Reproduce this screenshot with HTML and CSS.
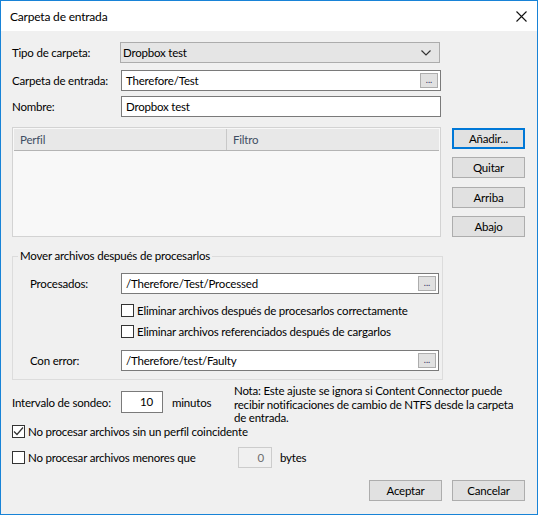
FILE: index.html
```html
<!DOCTYPE html>
<html lang="es">
  <head>
    <meta charset="UTF-8">
    <title>Carpeta de entrada</title>
    <link rel="stylesheet" href="styles.css">
  </head>
  <body>
    <div class="dialog">
      <div class="titlebar">
        <span class="title">Carpeta de entrada</span>
        <span class="close">
          <svg width="11" height="11" viewBox="0 0 11 11"><path d="M0.5 0.5 L10.5 10.5 M10.5 0.5 L0.5 10.5" stroke="#111" stroke-width="1.1" fill="none"/></svg>
        </span>
      </div>

      <div class="content">
        <div class="row row_first">
          <div class="label">Tipo de carpeta:</div>
          <div class="combo">
            <span>Dropbox test</span>
            <svg width="10" height="6" viewBox="0 0 10 6"><path d="M0.5 0.5 L5 5 L9.5 0.5" stroke="#333" stroke-width="1.2" fill="none"/></svg>
          </div>
        </div>
        <div class="row row_second">
          <div class="label">Carpeta de entrada:</div>
          <div class="textbox">
            <span>Therefore/Test</span>
            <span class="browse">...</span>
          </div>
        </div>
        <div class="row row_third">
          <div class="label">Nombre:</div>
          <div class="textbox"><span>Dropbox test</span></div>
        </div>

        <div class="profiles">
          <div class="listview">
            <div class="list_header">
              <div class="col col_profile">Perfil</div>
              <div class="col col_filter">Filtro</div>
            </div>
          </div>
          <div class="side_buttons">
            <div class="button button_default">Añadir...</div>
            <div class="button">Quitar</div>
            <div class="button">Arriba</div>
            <div class="button">Abajo</div>
          </div>
        </div>

        <fieldset class="group">
          <legend>Mover archivos después de procesarlos</legend>
          <div class="row">
            <div class="label label_group">Procesados:</div>
            <div class="textbox textbox_group">
              <span>/Therefore/Test/Processed</span>
              <span class="browse">...</span>
            </div>
          </div>
          <div class="check_row check_first">
            <span class="checkbox"></span>
            <span>Eliminar archivos después de procesarlos correctamente</span>
          </div>
          <div class="check_row check_second">
            <span class="checkbox"></span>
            <span>Eliminar archivos referenciados después de cargarlos</span>
          </div>
          <div class="row row_error">
            <div class="label label_group">Con error:</div>
            <div class="textbox textbox_group">
              <span>/Therefore/test/Faulty</span>
              <span class="browse">...</span>
            </div>
          </div>
        </fieldset>

        <div class="polling">
          <div class="polling_left">
            <div class="label">Intervalo de sondeo:</div>
            <div class="numbox">10</div>
            <span class="unit">minutos</span>
          </div>
          <div class="note">Nota: Este ajuste se ignora si Content Connector puede<br>recibir notificaciones de cambio de NTFS desde la carpeta<br>de entrada.</div>
        </div>

        <div class="check_row check_profile">
          <span class="checkbox">
            <svg width="11" height="11" viewBox="0 0 11 11"><path d="M1 5.5 L4 8.5 L10 1.5" stroke="#333" stroke-width="1.2" fill="none"/></svg>
          </span>
          <span>No procesar archivos sin un perfil coincidente</span>
        </div>
        <div class="check_row check_size">
          <span class="checkbox"></span>
          <span class="size_text">No procesar archivos menores que</span>
          <div class="numbox numbox_disabled">0</div>
          <span class="unit unit_bytes">bytes</span>
        </div>

        <div class="footer">
          <div class="button">Aceptar</div>
          <div class="button">Cancelar</div>
        </div>
      </div>
    </div>
  </body>
</html>
```

FILE: styles.css
```css
body, html {
    margin: 0;
    padding: 0;
    background: #f0f0f0;
}
body {
    font-family: Lato, "Noto Sans", sans-serif;
    font-size: 11.5px;
    letter-spacing: -0.2px;
    color: #000;
}
.dialog {
    width: 538px;
    height: 515px;
    box-sizing: border-box;
    border: 1px solid #1883d7;
    display: flex;
    flex-direction: column;
    background: #f0f0f0;
}
.titlebar {
    height: 30px;
    background: #fff;
    display: flex;
    align-items: center;
    justify-content: space-between;
    flex-shrink: 0;
}
.title {
    padding-left: 9px;
    font-size: 12px;
}
.close {
    display: flex;
    padding-right: 10px;
    padding-top: 1px;
}
.content {
    padding: 11px 12px 0 11px;
}

/* label + control rows */
.row {
    display: flex;
    align-items: center;
    height: 21px;
}
.row_second {
    margin-top: 7px;
}
.row_third {
    margin-top: 5px;
}
.label {
    width: 109px;
    flex-shrink: 0;
    white-space: nowrap;
}
.combo {
    width: 320px;
    height: 21px;
    box-sizing: border-box;
    margin-left: -1px;
    border: 1px solid #acacac;
    background: #e5e5e5;
    display: flex;
    align-items: center;
    justify-content: space-between;
    padding: 0 8px 0 2px;
}
.textbox {
    width: 320px;
    height: 21px;
    box-sizing: border-box;
    border: 1px solid #7a7a7a;
    background: #fff;
    display: flex;
    align-items: center;
    justify-content: space-between;
    padding: 0 2px 0 4px;
}
.browse {
    width: 18px;
    height: 15px;
    box-sizing: border-box;
    border: 1px solid #adadad;
    background: #e1e1e1;
    font-size: 9px;
    letter-spacing: 0;
    line-height: 11px;
    text-align: center;
    color: #303060;
}

/* profile list and its buttons */
.profiles {
    display: flex;
    margin-top: 10px;
}
.listview {
    width: 430px;
    height: 110px;
    box-sizing: border-box;
    border: 1px solid #d3d3d3;
    background: #f8f8f8;
    padding: 1px 1px 0 1px;
}
.list_header {
    display: flex;
    height: 21px;
    background: #e8e8e8;
    border-bottom: 1px solid #b4b4b4;
    color: #3f4e63;
}
.col {
    display: flex;
    align-items: center;
    padding-left: 6px;
}
.col_profile {
    width: 206px;
    border-right: 1px solid #c8c8c8;
}
.side_buttons {
    display: flex;
    flex-direction: column;
    justify-content: space-between;
    margin: 1px 0 0 11px;
    height: 109px;
}
.button {
    width: 73px;
    height: 21px;
    box-sizing: border-box;
    border: 1px solid #adadad;
    background: #e1e1e1;
    display: flex;
    align-items: center;
    justify-content: center;
}
.button_default {
    border: 2px solid #0078d7;
}

/* group box */
.group {
    margin: 11px 0 0 0;
    width: 431px;
    box-sizing: border-box;
    border: 1px solid #dcdcdc;
    padding: 9px 0 8px 17px;
}
.group legend {
    padding: 0 2px;
    margin-left: -12px;
    line-height: 16px;
}
.label_group {
    width: 91px;
}
.textbox_group {
    width: 318px;
}
.check_row {
    display: flex;
    align-items: center;
    height: 16px;
    white-space: nowrap;
}
.group .check_row {
    padding-left: 91px;
}
.check_first {
    margin-top: 8px;
}
.check_second {
    margin-top: 5px;
}
.row_error {
    margin-top: 11px;
}
.checkbox {
    width: 13px;
    height: 13px;
    box-sizing: border-box;
    border: 1px solid #333;
    background: #fff;
    margin-right: 3px;
    display: flex;
    align-items: center;
    justify-content: center;
    flex-shrink: 0;
}

/* polling interval and note */
.polling {
    display: flex;
    margin-top: 4px;
    height: 40px;
}
.polling_left {
    display: flex;
    align-items: center;
    margin-top: 7px;
    height: 22px;
    width: 222px;
    flex-shrink: 0;
}
.numbox {
    width: 42px;
    height: 22px;
    box-sizing: border-box;
    border: 1px solid #7a7a7a;
    background: #fff;
    text-align: right;
    padding-right: 9px;
    line-height: 20px;
    flex-shrink: 0;
}
.unit {
    margin-left: 9px;
}
.note {
    line-height: 13.5px;
    white-space: nowrap;
}
.check_profile {
    height: 15px;
}
.check_size {
    height: 21px;
    margin-top: 8px;
}
.size_text {
    width: 210px;
}
.numbox_disabled {
    width: 34px;
    height: 21px;
    border-color: #cccccc;
    background: #f0f0f0;
    color: #6d6d6d;
    padding-right: 7px;
    line-height: 19px;
}
.unit_bytes {
    margin-left: 8px;
}
.footer {
    display: flex;
    justify-content: flex-end;
    gap: 10px;
    margin-top: 12px;
}
```
